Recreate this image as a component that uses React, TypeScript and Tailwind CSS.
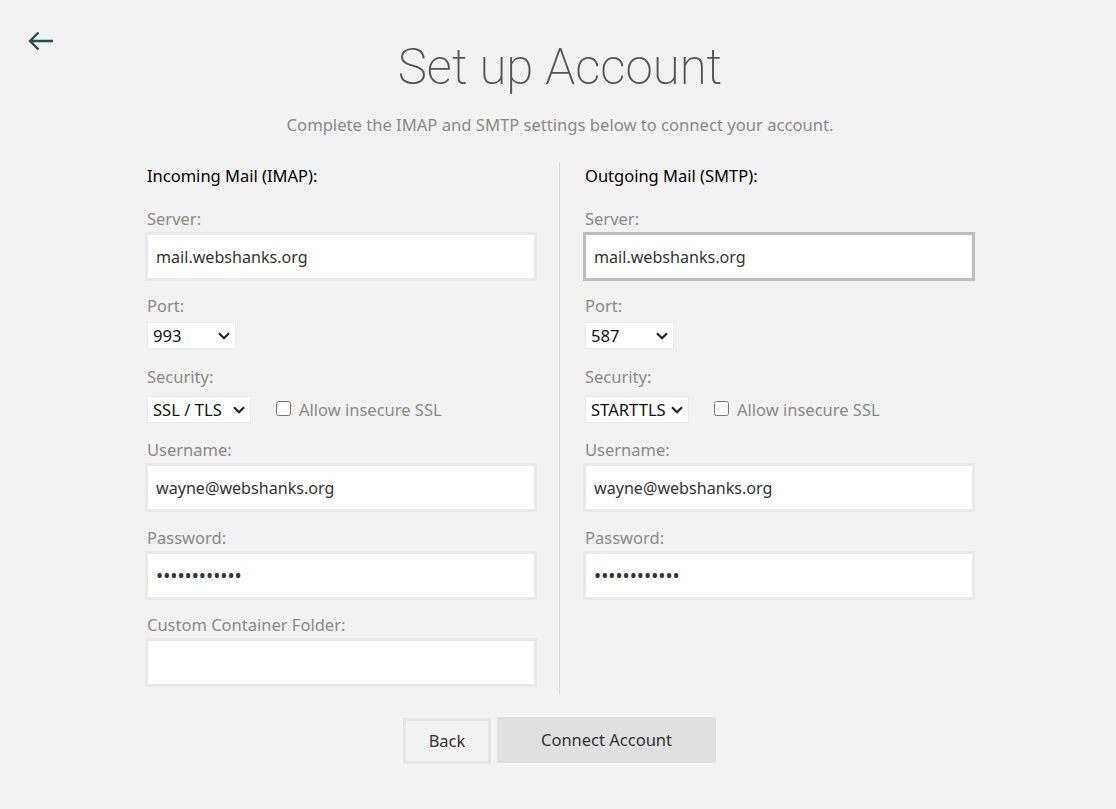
import React from 'react';

const font = "font-['Noto_Sans',sans-serif]";

const Field: React.FC<{ label: string; value?: string; type?: string; focused?: boolean; className?: string }> = ({
  label,
  value = '',
  type = 'text',
  focused,
  className = '',
}) => (
  <div className={className}>
    <label className="block h-[25px] pl-[2px] text-[16.5px] leading-[24px] text-[#8a8a8a]">{label}</label>
    <input
      type={type}
      value={value}
      readOnly
      className={`block h-[49px] w-[392px] border-[3px] bg-white px-[8px] text-[#333] outline-none ${
        type === 'password' ? 'text-[19px]' : 'text-[16.1px]'
      } ${focused ? 'border-[#bdbdbd]' : 'border-[#e9e9e9]'}`}
    />
  </div>
);

const Picker: React.FC<{ value: string; options: string[]; width: string }> = ({ value, options, width }) => (
  <div className={`relative ${width}`}>
    <select
      value={value}
      onChange={() => {}}
      className="block h-[27px] w-full appearance-none border border-[#eaeaea] bg-white pl-[5px] pt-[1px] text-[16.6px] text-[#111] outline-none"
    >
      {options.map((o) => (
        <option key={o}>{o}</option>
      ))}
    </select>
    <svg
      className="pointer-events-none absolute right-[6px] top-[10px] text-[#222]"
      width="12"
      height="8"
      viewBox="0 0 12 8"
      fill="none"
      stroke="currentColor"
      strokeWidth="2.2"
    >
      <path d="M1 1.2 6 6.2 11 1.2" />
    </svg>
  </div>
);

const Column: React.FC<{
  title: string;
  port: string;
  security: string;
  focused?: boolean;
  children?: React.ReactNode;
}> = ({ title, port, security, focused, children }) => (
  <div className="w-[392px]">
    <h2 className="h-[46px] pl-[2px] pt-[1px] text-[16.5px] leading-[24px] text-black">{title}</h2>
    <Field label="Server:" value="mail.webshanks.org" focused={focused} className="mt-[-2px]" />
    <div className="mt-[13px] pl-[2px]">
      <label className="block h-[28px] text-[16.5px] leading-[24px] text-[#8a8a8a]">Port:</label>
      <Picker value={port} options={['993', '587', '465', '143', '25']} width="w-[89px]" />
    </div>
    <div className="mt-[16px] pl-[2px]">
      <label className="block h-[31px] text-[16.5px] leading-[24px] text-[#8a8a8a]">Security:</label>
      <div className="flex items-center">
        <Picker value={security} options={['SSL / TLS', 'STARTTLS', 'None']} width="w-[104px]" />
        <input type="checkbox" readOnly className="mb-[2px] ml-[25px] h-[15px] w-[15px]" />
        <span className="ml-[8px] pt-[1px] text-[16.5px] text-[#8a8a8a]">Allow insecure SSL</span>
      </div>
    </div>
    <Field label="Username:" value="wayne@webshanks.org" className="mt-[15px]" />
    <Field label="Password:" value="wayne1234567" type="password" className="mt-[14px]" />
    {children}
  </div>
);

export default function App() {
  return (
    <div className={`relative h-[809px] w-[1116px] overflow-hidden bg-[#f2f2f2] ${font}`}>
      <button className="absolute left-[28px] top-[31px] text-[#264f52]">
        <svg width="26" height="20" viewBox="0 0 26 20" fill="none" stroke="currentColor" strokeWidth="2.4">
          <path d="M25 10H2M10.5 1.5 2 10l8.5 8.5" />
        </svg>
      </button>

      <div className="flex flex-col items-center">
        <h1 className="mt-[35px] pl-[4px] font-['Roboto',sans-serif] text-[49.2px] font-extralight leading-[64px] text-[#555]">
          Set up Account
        </h1>
        <p className="mt-[14px] pl-[4px] text-[16.6px] leading-[24px] text-[#8a8a8a]">
          Complete the IMAP and SMTP settings below to connect your account.
        </p>

        <div className="mt-[26px] flex pl-[4px]">
          <Column title="Incoming Mail (IMAP):" port="993" security="SSL / TLS">
            <Field label="Custom Container Folder:" className="mb-[8px] mt-[13px]" />
          </Column>
          <div className="ml-[22px] mr-[23px] w-[1px] bg-[#d9d9d9]" />
          <Column title="Outgoing Mail (SMTP):" port="587" security="STARTTLS" focused />
        </div>

        <div className="mt-[22px] flex items-start pl-[3px]">
          <button className="mt-[1px] h-[46px] w-[88px] border-[3px] border-[#e6e6e6] text-[16.5px] text-[#333]">
            Back
          </button>
          <button className="ml-[6px] h-[46px] w-[219px] bg-[#e0e0e0] text-[16.5px] text-[#333]">Connect Account</button>
        </div>
      </div>
    </div>
  );
}
